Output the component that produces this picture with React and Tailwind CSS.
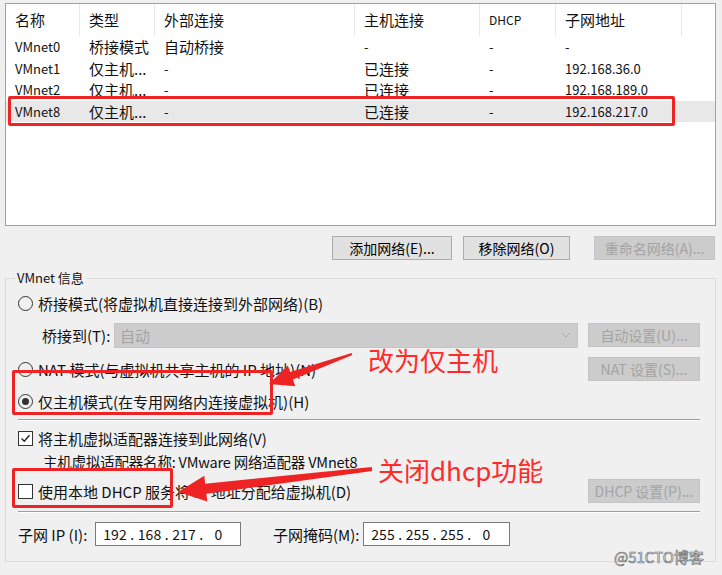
import React from 'react';

const cols = [
  { label: '名称', w: 'w-[74px]' },
  { label: '类型', w: 'w-[75px]' },
  { label: '外部连接', w: 'w-[200px]' },
  { label: '主机连接', w: 'w-[125px]' },
  { label: 'DHCP', w: 'w-[76px]', small: true },
  { label: '子网地址', w: 'w-[126px]' },
];

const rows = [
  ['VMnet0', '桥接模式', '自动桥接', '-', '-', '-'],
  ['VMnet1', '仅主机...', '-', '已连接', '-', '192.168.36.0'],
  ['VMnet2', '仅主机...', '-', '已连接', '-', '192.168.189.0'],
  ['VMnet8', '仅主机...', '-', '已连接', '-', '192.168.217.0'],
];

function arrowPoints(tx, ty, sx, sy, L, W, w, t) {
  const dx = sx - tx, dy = sy - ty;
  const len = Math.hypot(dx, dy);
  const ux = dx / len, uy = dy / len;
  const nx = -uy, ny = ux;
  const bx = tx + ux * L, by = ty + uy * L;
  const p = [
    [tx, ty],
    [bx + nx * W, by + ny * W],
    [bx + nx * w, by + ny * w],
    [sx + nx * t, sy + ny * t],
    [sx - nx * t, sy - ny * t],
    [bx - nx * w, by - ny * w],
    [bx - nx * W, by - ny * W],
  ];
  return p.map((q) => q.map((v) => v.toFixed(1)).join(',')).join(' ');
}

function Radio({ checked, children }) {
  return (
    <div className="flex items-center h-[26px]">
      <span className="w-[15px] h-[15px] rounded-full border border-[#333] bg-[#f0f0f0] flex items-center justify-center">
        {checked && <span className="w-[7px] h-[7px] rounded-full bg-[#333]" />}
      </span>
      <span className="ml-[5px] text-[15px] leading-none">{children}</span>
    </div>
  );
}

function Check({ checked, children }) {
  return (
    <div className="flex items-center h-[26px]">
      <span className="w-[15px] h-[15px] border border-[#333] bg-white flex items-center justify-center">
        {checked && (
          <svg width="11" height="11" viewBox="0 0 11 11">
            <path d="M1.5 5.5 L4.3 8.3 L9.5 2.2" fill="none" stroke="#222" strokeWidth="1.4" />
          </svg>
        )}
      </span>
      <span className="ml-[5px] text-[15px] leading-none">{children}</span>
    </div>
  );
}

function Btn({ disabled, className = '', children }) {
  return (
    <div
      className={
        'h-[24px] flex items-center justify-center text-[14px] leading-none border ' +
        (disabled ? 'bg-[#cccccc] border-[#c4c4c4] text-[#a3a3a3] ' : 'bg-[#e1e1e1] border-[#adadad] text-black ') +
        className
      }
    >
      {children}
    </div>
  );
}

function IpBox({ parts, className = '' }) {
  return (
    <div className={'h-[24px] border border-[#7a7a7a] bg-white flex items-center pl-[6px] text-[14px] leading-none ' + className}>
      {parts.map((p, i) => (
        <React.Fragment key={i}>
          {i > 0 && <span className="w-[8.5px] text-center">.</span>}
          <span className="w-[26px] text-center">{p}</span>
        </React.Fragment>
      ))}
    </div>
  );
}

export default function App() {
  return (
    <div className="relative w-[722px] h-[575px] bg-[#f0f0f0] overflow-hidden text-[#111] font-['Noto_Sans_CJK_SC','Liberation_Sans',sans-serif]">
      <div className="pt-[3px]">
        {/* network list */}
        <div className="ml-[5px] w-[711px] h-[223px] border border-[#a0a0a0] bg-white">
          <div className="flex h-[32px]">
            {cols.map((c) => (
              <div key={c.label} className={c.w + ' h-full flex items-center pl-[9px] border-r border-[#e8e8e8] ' + (c.small ? 'text-[12px]' : 'text-[15px]')}>
                {c.label}
              </div>
            ))}
          </div>
          {rows.map((r, ri) => (
            <div key={r[0]} className={'flex h-[21.5px] items-center ' + (ri === 3 ? 'bg-[#e8e8e8]' : '')}>
              {r.map((cell, ci) => (
                <div
                  key={ci}
                  className={cols[ci].w + ' pl-[9px] leading-none whitespace-nowrap ' + (ci === 0 || ci === 5 || cell === '-' ? 'text-[13px]' : 'text-[15px]')}
                >
                  {cell}
                </div>
              ))}
            </div>
          ))}
        </div>

        {/* list buttons */}
        <div className="flex mt-[10px] h-[24px]">
          <Btn className="ml-[332px] w-[120px]">添加网络(E)...</Btn>
          <Btn className="ml-[11px] w-[107px]">移除网络(O)</Btn>
          <Btn disabled className="ml-[24px] w-[121px]">重命名网络(A)...</Btn>
        </div>

        {/* VMnet info group */}
        <fieldset className="mt-[10px] ml-[5px] w-[711px] h-[292px] border border-[#dcdcdc] pl-[12px] pr-[15px]">
          <legend className="ml-[-3px] px-[2px] text-[13px] leading-[16px]">VMnet 信息</legend>

          <div className="mt-[4px]">
            <Radio>桥接模式(将虚拟机直接连接到外部网络)(B)</Radio>
          </div>

          <div className="mt-[6px] flex items-center h-[26px]">
            <span className="ml-[24px] w-[72px] text-[15px] leading-none">桥接到(T):</span>
            <div className="w-[464px] h-[25px] bg-[#cccccc] border border-[#c4c4c4] flex items-center justify-between pl-[5px] pr-[6px]">
              <span className="text-[15px] leading-none text-[#a3a3a3]">自动</span>
              <svg width="10" height="6" viewBox="0 0 10 6">
                <path d="M1 1 L5 5 L9 1" fill="none" stroke="#a8a8a8" strokeWidth="1" />
              </svg>
            </div>
            <Btn disabled className="ml-auto w-[112px]">自动设置(U)...</Btn>
          </div>

          <div className="mt-[8px] flex items-center justify-between">
            <Radio>NAT 模式(与虚拟机共享主机的 IP 地址)(N)</Radio>
            <Btn disabled className="w-[112px]">NAT 设置(S)...</Btn>
          </div>

          <div className="mt-[6px]">
            <Radio checked>仅主机模式(在专用网络内连接虚拟机)(H)</Radio>
          </div>

          <div className="mt-[5px] h-[2px] border-t border-[#a0a0a0] border-b border-b-white" />

          <div className="mt-[4px]">
            <Check checked>将主机虚拟适配器连接到此网络(V)</Check>
          </div>
          <div className="h-[22px] flex items-center pl-[25px] text-[14.5px] leading-none tracking-[-0.2px]">
            主机虚拟适配器名称: VMware 网络适配器 VMnet8
          </div>

          <div className="mt-[5px] flex items-center justify-between">
            <Check>使用本地 DHCP 服务将 IP 地址分配给虚拟机(D)</Check>
            <Btn disabled className="w-[112px]">DHCP 设置(P)...</Btn>
          </div>

          <div className="mt-[7px] h-[2px] border-t border-[#a0a0a0] border-b border-b-white" />

          <div className="mt-[9px] flex items-center h-[24px]">
            <span className="w-[77px] text-[15px] leading-none">子网 IP (I):</span>
            <IpBox className="w-[146px]" parts={['192', '168', '217', '0']} />
            <span className="ml-[32px] w-[90px] text-[15px] leading-none">子网掩码(M):</span>
            <IpBox className="w-[147px]" parts={['255', '255', '255', '0']} />
          </div>
        </fieldset>
      </div>

      {/* annotations */}
      <div className="absolute left-[8px] top-[96px] w-[667px] h-[30px] border-[3px] border-[#ee2424] rounded-[2px]" />
      <div className="absolute left-[12px] top-[370px] w-[261px] h-[45px] border-[3px] border-[#ee2424] rounded-[2px]" />
      <div className="absolute left-[12px] top-[468px] w-[161px] h-[40px] border-[3px] border-[#ee2424] rounded-[2px]" />

      <svg className="absolute left-0 top-0 pointer-events-none" width="722" height="575" viewBox="0 0 722 575">
        <polygon points={arrowPoints(269, 384, 352, 354, 24, 11, 4, 1)} fill="#ee2424" />
        <polygon points={arrowPoints(178, 492, 372, 469, 28, 13, 5, 2)} fill="#ee2424" />
      </svg>

      <div className="absolute left-[368px] top-[342px] text-[26px] leading-[36px] text-[#ff2b2b]">改为仅主机</div>
      <div className="absolute left-[378px] top-[452px] text-[26px] leading-[36px] text-[#ff2b2b]">关闭dhcp功能</div>

      <div className="absolute left-[614px] top-[547px] text-[15px] leading-[20px] text-[#f4f4f4] [-webkit-text-stroke:0.7px_#777]">@51CTO博客</div>
    </div>
  );
}
